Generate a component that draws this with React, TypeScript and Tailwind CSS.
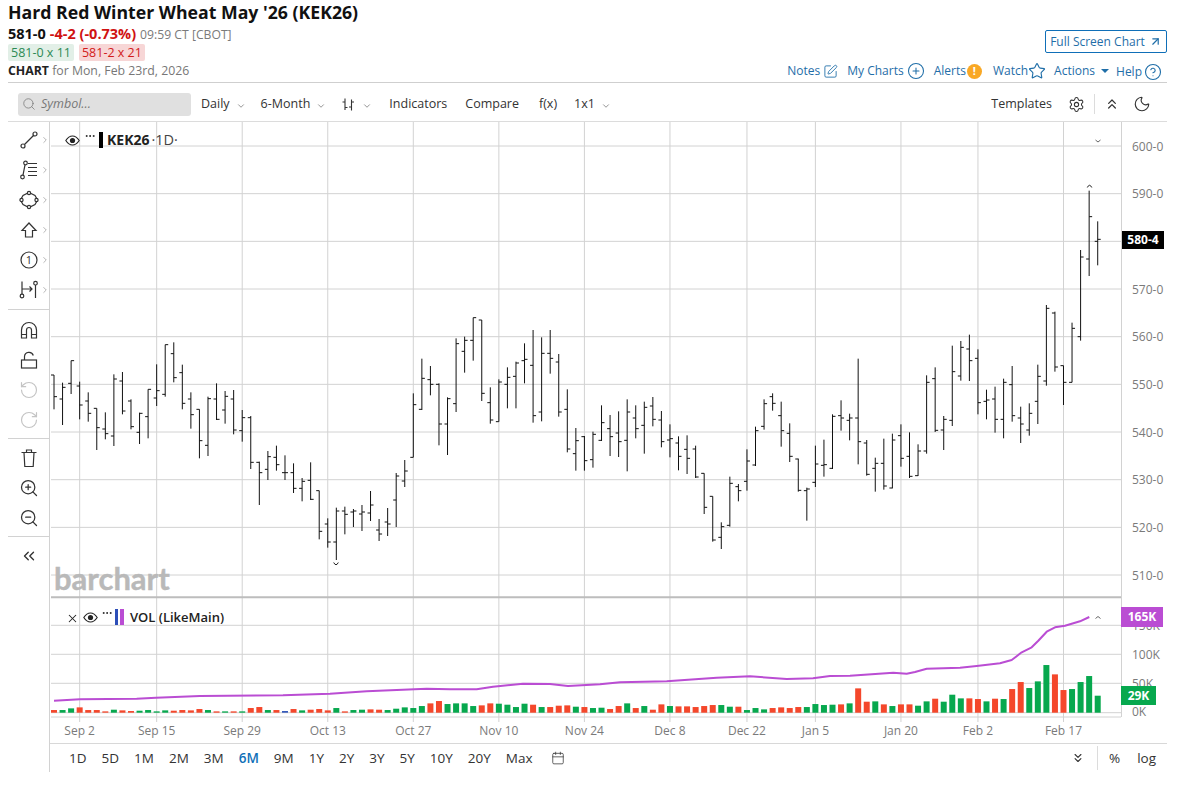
import React from "react";
import { SquarePen, CirclePlus, Star, CircleHelp, Settings, ChevronsUp, ChevronsDown, ChevronsLeft, ChevronDown, ChevronRight, Moon, Search, ArrowUpRight, ZoomIn, ZoomOut, RotateCcw, RotateCw, Calendar, MoreHorizontal, X } from "lucide-react";

const STEP = 8.555;
const bx = (i: number) => 54 + STEP * i;
const seg = (b: number, rows: number[][]) => rows.map((r) => r.map((v) => b + v / 3));
const BARS: number[][] = [
  ...seg(330, [[135,238,135,200],[158,285,207,172],[92,192,160,92],[155,268,168,225],[187,275,213,250],[235,360,235,293],[247,328,297,311],[133,348,318,147],[126,253,153,243],[208,298,213,290],[248,342,307,250],[178,325,260,178],[103,228,204,182],[44,200,193,44],[37,157,71,143],[104,238,128,220],[187,296,207,254],[238,385,238,332],[200,378,346,206],[160,270,207,268],[183,281,240,199],[180,313,207,300],[240,335,302,263],[258,417,263,397],[395,525,397,428],[363,450,418,380],[347,422,382,404],[376,450,428,428],[400,489,428,475],[444,514,475,454],[397,510,451,508],[482,628,482,604],[565,653,582,636],[533,690,636,543],[530,613,543,553]]),
  [509,527,512,511],[505,531,514,512],[491,521,513,505],[519,541,530,534],[508,536,522,524],[473,527,500,476],[460,487,481,471],
  ...seg(300, [[280,472,472,314],[176,330,328,235],[198,286,239,253],[250,436,253,372],[292,465,372,296],[115,336,311,131],[110,218,154,121],[53,182,121,53],[60,303,60,280],[262,371,308,360],[238,365,365,246],[202,325,253,232],[185,325,229,189],[130,250,182,178],[90,368,196,347],[112,364,336,160],[90,221,160,175],[162,350,186,336],[268,457,328,447],[384,512,461,422],[408,512,410,482],[395,503,479,403],[316,423,421,368],[345,468,386,410],[334,471,399,425],[298,514,421,336],[316,415,354,386],[305,461,376,322]]),
  ...seg(340, [[171,259,198,238],[213,322,240,305],[253,352,300,296],[289,391,309,349],[286,402,328,355],[317,414,327,411],[400,522,400,502],[469,605,469,600],[547,627,592,560],[410,560,556,430],[432,484,440,452],[328,452,424,363],[260,378,375,272],[178,269,259,191],[160,212,170,190],[185,320,227,272],[250,366,280,349],[356,455,357,451],[443,542,452,447],[317,441,427,372],[299,410,376,374],[223,387,385,229],[181,272,227,234],[221,301,241,234],[56,373,234,305],[300,407,309,403],[353,455,385,370],[296,449,370,438],[281,445,444,300],[253,380,287,355],[277,414,349,409],[313,408,407,333],[106,341,333,127],[82,276,116,271]]),
  ...seg(290, [[378,480,420,388],[167,408,391,245],[153,272,258,172],[134,273,177,212],[178,373,205,338],[299,388,334,330],[290,428,327,388],[266,445,388,277],[228,395,284,377],[350,459,384,402],[340,437,420,370],[224,402,334,259],[45,287,273,55],[65,245,69,231],[227,345,227,277],[98,277,277,115]]),
  ...seg(130, [[360,632,620,381],[182,438,387,260],[274,406,334,328]]),
];
const VOL_A = "r120 g120 g115 r112 r120 r120 r124 g119 r121 r123 g122 g120 g124 g121 r122 r120 r121 r117 g120 r124 g124 r124 g124 r114 r111 g120 r120 b123 r117 g121 r119 r117 r121 g114 r124 g120 g119 r118 r119 g120 g116 g112 g114 g108 r100 r93 g102 g100 g100 g108 r106 r100 g101 g104 g111 g101 r104 g111 r111 r107 r106 g110 r111 g114 g113 r117 r108 g100 r114 g108 r119 r103 g108 r109 r109 r111 r108 r105 g105 g110 r110 g120 g114 g118 r114 r112 r114 r111 g111 g102 g105 g104 r103 g100".split(" ");
const VOL_B = "r295 r335 g334 r343 g348 r343 r343 g347 g334 r326 g335 g314 g325 r325 r327 g334 r326 g327 r297 r276 g294 g274 g225 r253 r300 g297 g276 g258 g317".split(" ");
const VOL = [...VOL_A.map((s) => [s[0], (128 - +s.slice(1)) / 3] as const), ...VOL_B.map((s) => [s[0], (368 - +s.slice(1)) / 3] as const)];
const VCOL: Record<string, string> = { r: "#f4472b", g: "#07a84e", b: "#2f55b8" };
const LINE = "54,700.7 80,699.3 136.7,698.7 156,697.7 200,696 283,695.3 330,693.8 366.7,691.3 426.7,688.7 450,689.3 476.7,689.3 493,686.7 523,683.7 550,684 568,686 600,684.3 620,682.3 666.7,681.3 716.7,677.7 750,676.3 786.7,679 813,678.3 830,676 850,675.7 893.3,672.7 906.7,673.7 915,672 926.7,668.7 960,667.7 976.7,666 1000,663.3 1011.7,660 1021.7,652.3 1031.7,647.3 1038.3,640.7 1046.7,631.7 1055,627.3 1065,625.7 1080,621.3 1089.3,617";
const DATES: [number, string][] = [[3,"Sep 2"],[12,"Sep 15"],[22,"Sep 29"],[32,"Oct 13"],[42,"Oct 27"],[52,"Nov 10"],[62,"Nov 24"],[72,"Dec 8"],[81,"Dec 22"],[89,"Jan 5"],[99,"Jan 20"],[108,"Feb 2"],[118,"Feb 17"]];
const PRICES = ["600-0","590-0",null,"570-0","560-0","550-0","540-0","530-0","520-0","510-0"];
const GRID = "#d2d2d2";

function Chart() {
  return (
    <svg width={1118} height={621} viewBox="50 122 1118 621" className="block">
      {DATES.map(([i]) => (
        <g key={i} stroke={GRID} strokeWidth={1}>
          <line x1={bx(i)} x2={bx(i)} y1={122} y2={597} />
          <line x1={bx(i)} x2={bx(i)} y1={598} y2={722} />
        </g>
      ))}
      {PRICES.map((_, k) => (
        <line key={k} x1={51} x2={1121} y1={146 + k * 47.67} y2={146 + k * 47.67} stroke={GRID} />
      ))}
      {[625.3, 654.3, 683.3, 712.7].map((y) => (
        <line key={y} x1={51} x2={1121} y1={y} y2={y} stroke={GRID} />
      ))}
      <line x1={51} x2={1121} y1={597.3} y2={597.3} stroke="#bdbdbd" strokeWidth={2} />
      <line x1={51} x2={1121} y1={717} y2={717} stroke={GRID} />
      <line x1={1121.5} x2={1121.5} y1={122} y2={717} stroke={GRID} />
      {BARS.map(([h, l, o, c], i) => {
        const x = bx(i);
        return (
          <g key={i} stroke="#111" strokeWidth={1}>
            <line x1={x} x2={x} y1={h} y2={l} />
            <line x1={x - 3} x2={x} y1={o} y2={o} />
            <line x1={x} x2={x + 3} y1={c} y2={c} />
          </g>
        );
      })}
      <path d="M1087.3 187.5Q1089.5 183 1091.8 187.5" fill="none" stroke="#222" />
      <path d="M333.7 562.5Q336 567 338.3 562.5" fill="none" stroke="#222" />
      {VOL.map(([c, h], i) => (
        <rect key={i} x={bx(i) - 3} y={712.7 - h} width={6} height={h} fill={VCOL[c]} />
      ))}
      <polyline points={LINE} fill="none" stroke="#ba4dd3" strokeWidth={2} strokeLinejoin="round" />
      <g fontFamily="'Open Sans', sans-serif" fontSize={12} fill="#7a7a7a" textAnchor="middle">
        {DATES.map(([i, t]) => (
          <text key={i} x={bx(i)} y={735}>{t}</text>
        ))}
      </g>
      <g fontFamily="'Open Sans', sans-serif" fontSize={12} fill="#7a7a7a">
        {PRICES.map((t, k) => t && <text key={k} x={1132} y={150.5 + k * 47.67}>{t}</text>)}
        <text x={1132} y={630}>150K</text>
        <text x={1132} y={658.5}>100K</text>
        <text x={1132} y={687.5}>50K</text>
        <text x={1132} y={716}>0K</text>
      </g>
      <text x={54} y={590} fontFamily="Lato, sans-serif" fontWeight={700} fontSize={31} fill="#b9b9b9" stroke="#b9b9b9" strokeWidth={0.4}>barchart</text>
      <path d="M1095.5 140l2.5 2 2.5-2" fill="none" stroke="#555" strokeWidth={0.9} />
      <path d="M1095.5 618.5l2.5-2 2.5 2" fill="none" stroke="#555" strokeWidth={0.9} />
    </svg>
  );
}

const Tool = ({ children, more }: { children: React.ReactNode; more?: boolean }) => (
  <div className="relative flex h-[30px] w-full items-center justify-center text-[#333]">
    {children}
    {more && <ChevronRight size={10} strokeWidth={1.3} className="absolute left-[32px] top-[10px] text-[#777]" />}
  </div>
);
const Ico = ({ children }: { children: React.ReactNode }) => (
  <svg width={20} height={20} viewBox="0 0 20 20" fill="none" stroke="currentColor" strokeWidth={1.2}>{children}</svg>
);
const EyeMark = () => (
  <svg width={15} height={11} viewBox="0 0 15 11" fill="none" stroke="#222" strokeWidth={1.1}>
    <path d="M0.8 5.5C3 2 5 1 7.5 1s4.5 1 6.7 4.5C12 9 10 10 7.5 10S3 9 0.8 5.5Z" />
    <circle cx={7.5} cy={5.5} r={2.6} fill="#222" stroke="none" />
  </svg>
);

function LeftTools() {
  return (
    <div className="flex h-[650px] w-[42px] shrink-0 flex-col border-r border-[#d2d2d2] pt-[3px]">
      <Tool more><Ico><circle cx={4} cy={16} r={2} /><circle cx={16} cy={4} r={2} /><path d="M5.5 14.5L14.5 5.5" /></Ico></Tool>
      <Tool more><Ico><circle cx={3.5} cy={17} r={1.8} /><circle cx={6.5} cy={3} r={1.8} /><path d="M4 15.2L6 4.8M9 3.5h9M9 7.5h9M9 11.5h9M9 15.5h9" /></Ico></Tool>
      <Tool more><Ico><path d="M10 2.5L16 5.5 18.5 10 16 14.5 10 17.5 4 14.5 1.5 10 4 5.5Z" /><circle cx={10} cy={3} r={1.6} fill="#fff" /><circle cx={17.5} cy={10} r={1.6} fill="#fff" /><circle cx={10} cy={17} r={1.6} fill="#fff" /><circle cx={2.5} cy={10} r={1.6} fill="#fff" /></Ico></Tool>
      <Tool more><Ico><path d="M10 3L17 10.5H13.5V17H6.5V10.5H3Z" /></Ico></Tool>
      <Tool more><Ico><circle cx={10} cy={10} r={8} /><text x={10} y={14} textAnchor="middle" fontSize={11} fill="currentColor" stroke="none" fontFamily="'Open Sans',sans-serif">1</text></Ico></Tool>
      <Tool more><Ico><path d="M3 1.5V14M3 9h10M10.5 6.5L13 9l-2.5 2.5M16.5 5V18" /><circle cx={3} cy={16} r={1.8} /><circle cx={16.5} cy={3.2} r={1.8} /></Ico></Tool>
      <div className="mt-[4px] mb-[5px] h-px bg-[#d2d2d2]" />
      <Tool><Ico><path d="M2.5 18V10a7.5 7.5 0 0115 0v8h-5v-8a2.5 2.5 0 00-5 0v8ZM2.5 14.5h5M12.5 14.5h5" /></Ico></Tool>
      <Tool><Ico><rect x={2.5} y={10} width={15} height={8} /><path d="M5.5 10V6.5a4.5 4.5 0 018.8-1" /></Ico></Tool>
      <Tool><RotateCcw size={20} strokeWidth={1.4} className="text-[#c4c4c4]" /></Tool>
      <Tool><RotateCw size={20} strokeWidth={1.4} className="text-[#c4c4c4]" /></Tool>
      <div className="mt-[3px] mb-[4px] h-px bg-[#d2d2d2]" />
      <Tool><Ico><path d="M2.5 4.5h15M5 4.5l.8 14h8.4l.8-14M7.5 4.5V2h5v2.5" /></Ico></Tool>
      <Tool><ZoomIn size={20} strokeWidth={1.5} /></Tool>
      <Tool><ZoomOut size={20} strokeWidth={1.5} /></Tool>
      <div className="mt-[3px] mb-[4px] h-px bg-[#d2d2d2]" />
      <Tool><ChevronsLeft size={18} strokeWidth={1.8} /></Tool>
    </div>
  );
}

const Tb = ({ children, c }: { children: React.ReactNode; c?: boolean }) => (
  <div className="flex items-center text-[12.5px] text-[#333]">
    {children}
    {c && <ChevronDown size={10} strokeWidth={1.5} className="ml-[6px] mt-[3px] text-[#555]" />}
  </div>
);

const RANGES = ["1D","5D","1M","2M","3M","6M","9M","1Y","2Y","3Y","5Y","10Y","20Y","Max"];
const LK = "flex items-center text-[12px] text-[#1f6ea8]";

export default function App() {
  return (
    <div className="relative h-[793px] w-[1186px] overflow-hidden bg-white font-['Open_Sans',sans-serif]">
      <div className="ml-[8px] flex h-[83px] w-[1159px] justify-between border-b border-[#cfcfcf]">
        <div className="flex flex-col">
          <div className="h-[25px] text-[17.7px] font-bold leading-[25px] text-[#111]">Hard Red Winter Wheat May '26 (KEK26)</div>
          <div className="flex h-[19px] items-baseline leading-[17px]">
            <span className="text-[14.5px] font-bold text-[#111]">581-0</span>
            <span className="ml-[4px] text-[14.5px] font-bold text-[#d01212]">-4-2 (-0.73%)</span>
            <span className="ml-[4px] text-[12.2px] text-[#7a7a7a]">09:59 CT [CBOT]</span>
          </div>
          <div className="flex h-[17px] gap-[5px]">
            <span className="rounded-[2px] bg-[#e2efe7] px-[3px] text-[12.5px] leading-[17px] text-[#2d8a55]">581-0 x 11</span>
            <span className="rounded-[2px] bg-[#f7d6d6] px-[3px] text-[12.5px] leading-[17px] text-[#d21a1a]">581-2 x 21</span>
          </div>
          <div className="mt-[1px] text-[12.3px] leading-[18px] text-[#777]"><b className="text-[#222]">CHART</b> for Mon, Feb 23rd, 2026</div>
        </div>
        <div className="flex flex-col items-end">
          <div className="mt-[30px] flex h-[23px] w-[122px] items-center justify-center rounded-[2px] border border-[#0f6fb8] text-[12px] text-[#1f6ea8]">
            Full Screen Chart<ArrowUpRight size={13} strokeWidth={2.2} className="ml-[4px]" />
          </div>
          <div className="mr-[5px] mt-[8px] flex h-[20px] items-center">
            <div className={LK}>Notes<SquarePen size={15} strokeWidth={1.4} className="ml-[3px]" /></div>
            <div className={LK + " ml-[9px]"}>My Charts<CirclePlus size={18} strokeWidth={1.4} className="ml-[3px]" /></div>
            <div className={LK + " ml-[9px]"}>Alerts<span className="ml-px flex h-[15px] w-[15px] items-center justify-center rounded-full bg-[#f9a825] text-[11px] font-bold text-white">!</span></div>
            <div className={LK + " ml-[11px]"}>Watch<Star size={18} strokeWidth={1.5} /></div>
            <div className={LK + " ml-[8px]"}>Actions<span className="ml-[6px] h-0 w-0 border-x-[4px] border-t-[4px] border-x-transparent border-t-[#1f6ea8]" /></div>
            <div className={LK + " ml-[7px] mt-[1px]"}>Help<CircleHelp size={18} strokeWidth={1.5} className="ml-[2px]" /></div>
          </div>
        </div>
      </div>

      <div className="ml-[8px] flex h-[39px] w-[1159px] items-center border-b border-[#dcdcdc] pl-[10px] pt-[4px]">
        <div className="flex h-[23px] w-[173px] items-center rounded-[3px] bg-[#e0e0e0] pl-[4px] text-[12.5px] italic text-[#777]">
          <Search size={14} strokeWidth={1.3} className="mr-[5px] text-[#777]" />Symbol...
        </div>
        <div className="ml-[10px]"><Tb c>Daily</Tb></div>
        <div className="ml-[15px]"><Tb c>6-Month</Tb></div>
        <div className="ml-[15px]">
          <Tb c>
            <svg width={15} height={15} viewBox="0 0 15 15" fill="none" stroke="#333" strokeWidth={1.1}><path d="M4 1.5V13M1.5 5H4M4 10.5h2.5M10.5 2.5V13.5M8 10h2.5M10.5 5H13" /></svg>
          </Tb>
        </div>
        <div className="ml-[17px]"><Tb>Indicators</Tb></div>
        <div className="ml-[18px]"><Tb>Compare</Tb></div>
        <div className="ml-[20px]"><Tb>f(x)</Tb></div>
        <div className="ml-[17px]"><Tb c>1x1</Tb></div>
        <div className="ml-auto flex items-center">
          <Tb>Templates</Tb>
          <Settings size={17} strokeWidth={1.5} className="ml-[16px] text-[#333]" />
          <div className="ml-[9px] h-[20px] w-px bg-[#dcdcdc]" />
          <ChevronsUp size={16} strokeWidth={1.9} className="ml-[9px] text-[#333]" />
          <Moon size={18} strokeWidth={1.5} className="ml-[13px] mr-[16px] text-[#333]" />
        </div>
      </div>

      <div className="ml-[8px] flex w-[1159px]">
        <LeftTools />
        <div className="relative flex flex-col">
          <Chart />
          <div className="absolute left-[15px] top-[10px] flex items-center text-[#222]">
            <EyeMark />
            <MoreHorizontal size={12} strokeWidth={2} className="ml-[4px] -mt-[8px]" />
            <span className="ml-[3px] h-[16px] w-[4px] bg-black" />
            <span className="ml-[4px] text-[14px] font-bold leading-[16px]">KEK26</span>
            <span className="ml-[2px] text-[14.5px] leading-[16px] text-[#444]">·1D·</span>
          </div>
          <div className="absolute left-[16px] top-[487px] flex items-center text-[#222]">
            <X size={13} strokeWidth={1.9} className="mt-[3px]" />
            <span className="ml-[4px]"><EyeMark /></span>
            <MoreHorizontal size={12} strokeWidth={2} className="ml-[3px] -mt-[8px]" />
            <span className="ml-[2px] h-[16px] w-[3px] bg-[#2d4fb8]" />
            <span className="ml-[2px] h-[16px] w-[4px] bg-[#ba4dd3]" />
            <span className="ml-[6px] text-[13px] font-semibold leading-[16px]">VOL (LikeMain)</span>
          </div>
          <div className="absolute left-[1072px] top-[109px] flex h-[18px] w-[42px] items-center justify-center bg-black text-[12px] font-bold text-white">580-4</div>
          <div className="absolute left-[1071px] top-[485px] flex h-[20px] w-[42px] items-center justify-center bg-[#ba4dd3] text-[12px] font-bold text-white">165K</div>
          <div className="absolute left-[1071px] top-[564px] flex h-[19px] w-[35px] items-center justify-center bg-[#07a84e] text-[12px] font-bold text-white">29K</div>
          <div className="flex h-[29px] w-[1117px] items-center border-t border-[#d8d8d8] pl-[19px] text-[13.5px] text-[#333]">
            {RANGES.map((r) => (
              <span key={r} className={"mr-[15px] " + (r === "6M" ? "font-semibold text-[#0f6fb8]" : "")}>{r}</span>
            ))}
            <Calendar size={14} strokeWidth={1.3} className="ml-[3px]" />
            <ChevronsDown size={14} strokeWidth={1.9} className="ml-auto mr-[12px]" />
            <span className="mr-[11px] h-[24px] w-px bg-[#dcdcdc]" />
            <span className="mr-[17px]">%</span>
            <span className="mr-[11px]">log</span>
          </div>
        </div>
      </div>
    </div>
  );
}
